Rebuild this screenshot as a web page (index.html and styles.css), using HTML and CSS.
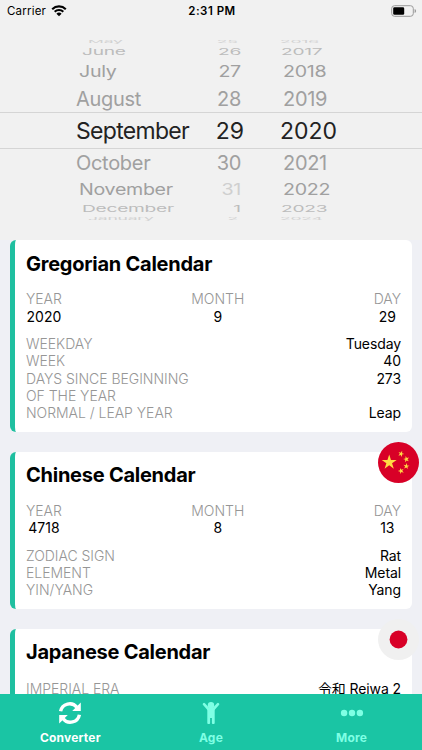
FILE: index.html
```html
<!DOCTYPE html>
<html lang="en">

<head>
  <meta charset="utf-8" />
  <title>Calendar Converter</title>
  <link rel="stylesheet" href="styles.css">
</head>

<body>
  <header class="status">
    <div class="carrier">Carrier
      <svg width="16" height="12" viewBox="0 0 16 12">
        <path d="M1.2 4.2a9.7 9.7 0 0 1 13.6 0M3.7 6.8a6.1 6.1 0 0 1 8.6 0" fill="none" stroke="#000" stroke-width="2.1" />
        <path d="M8 11.3 5.4 8.7a3.7 3.7 0 0 1 5.2 0z" />
      </svg>
    </div>
    <div class="time">2:31 PM</div>
    <svg class="battery" width="26" height="12" viewBox="0 0 26 12">
      <rect x=".7" y=".7" width="21.6" height="10.6" rx="2.8" fill="none" stroke="#999" />
      <rect x="2.2" y="2.2" width="11" height="7.6" rx="1.3" />
      <path d="M23.6 4v4q1.5-.5 1.5-2t-1.5-2z" fill="#999" />
    </svg>
  </header>

  <section class="picker">
    <div class="row edge"><span class="month">May</span><span class="day">25</span><span class="year">2016</span></div>
    <div class="row thin"><span class="month">June</span><span class="day">26</span><span class="year">2017</span></div>
    <div class="row far"><span class="month">July</span><span class="day">27</span><span class="year">2018</span></div>
    <div class="row near"><span class="month">August</span><span class="day">28</span><span class="year">2019</span></div>
    <div class="row selected"><span class="month">September</span><span class="day">29</span><span class="year">2020</span></div>
    <div class="row near"><span class="month">October</span><span class="day">30</span><span class="year">2021</span></div>
    <div class="row far"><span class="month">November</span><span class="day off">31</span><span class="year">2022</span></div>
    <div class="row thin"><span class="month">December</span><span class="day">1</span><span class="year">2023</span></div>
    <div class="row edge"><span class="month">January</span><span class="day">2</span><span class="year">2024</span></div>
  </section>

  <main class="cards">
    <article class="card gregorian">
      <h2>Gregorian Calendar</h2>
      <div class="date">
        <div><label>YEAR</label><b>2020</b></div>
        <div><label>MONTH</label><b>9</b></div>
        <div><label>DAY</label><b>29</b></div>
      </div>
      <dl>
        <dt>WEEKDAY</dt><dd>Tuesday</dd>
        <dt>WEEK</dt><dd>40</dd>
        <dt>DAYS SINCE BEGINNING<br />OF THE YEAR</dt><dd>273</dd>
        <dt>NORMAL / LEAP YEAR</dt><dd>Leap</dd>
      </dl>
    </article>

    <article class="card chinese">
      <svg class="flag" viewBox="0 0 512 512">
        <defs>
          <path id="star" d="M0-10 2.25-3.09 9.51-3.09 3.63 1.18 5.88 8.09 0 3.82-5.88 8.09-3.63 1.18-9.51-3.09-2.25-3.09z" />
        </defs>
        <circle cx="256" cy="256" r="256" fill="#d80027" />
        <g fill="#ffda44">
          <use href="#star" transform="translate(140 254) scale(9.8)" />
          <use href="#star" transform="translate(288 148) rotate(20) scale(4)" />
          <use href="#star" transform="translate(354 215) rotate(-12) scale(4)" />
          <use href="#star" transform="translate(354 303) rotate(8) scale(4)" />
          <use href="#star" transform="translate(288 361) rotate(-20) scale(4)" />
        </g>
      </svg>
      <h2>Chinese Calendar</h2>
      <div class="date">
        <div><label>YEAR</label><b>4718</b></div>
        <div><label>MONTH</label><b>8</b></div>
        <div><label>DAY</label><b>13</b></div>
      </div>
      <dl>
        <dt>ZODIAC SIGN</dt><dd>Rat</dd>
        <dt>ELEMENT</dt><dd>Metal</dd>
        <dt>YIN/YANG</dt><dd>Yang</dd>
      </dl>
    </article>

    <article class="card japanese">
      <svg class="flag" viewBox="0 0 512 512">
        <circle cx="256" cy="256" r="256" fill="#f0f0f0" />
        <circle cx="256" cy="256" r="111" fill="#d80027" />
      </svg>
      <h2>Japanese Calendar</h2>
      <dl>
        <dt>IMPERIAL ERA</dt><dd>令和 Reiwa 2</dd>
      </dl>
    </article>
  </main>

  <nav class="tabs">
    <div class="tab active">
      <svg width="24" height="24" viewBox="0 0 24 24">
        <path d="M2.6 10.3a9.2 9.2 0 0 1 16.3-4M21.4 13.7a9.2 9.2 0 0 1-16.3 4" fill="none" stroke="currentColor" stroke-width="3.4" />
        <path d="M22.8 1.5v8.6h-8.6zM1.2 22.5v-8.6h8.6z" fill="currentColor" />
      </svg>
      <span>Converter</span>
    </div>
    <div class="tab">
      <svg width="24" height="24" viewBox="0 0 24 24">
        <circle cx="12" cy="4.3" r="3.2" fill="currentColor" />
        <path d="M5 3.2 9.4 8h5.2L19 3.2" fill="none" stroke="currentColor" stroke-width="2.6" stroke-linecap="round" stroke-linejoin="round" />
        <path d="M8.3 7.5h7.4v14.6q0 .9-.9.9h-1q-.9 0-.9-.9V17h-1.8v5.1q0 .9-.9.9h-1q-.9 0-.9-.9z" fill="currentColor" />
      </svg>
      <span>Age</span>
    </div>
    <div class="tab">
      <svg width="24" height="24" viewBox="0 0 24 24" fill="currentColor">
        <circle cx="4.1" cy="12" r="3.2" />
        <circle cx="12" cy="12" r="3.2" />
        <circle cx="19.9" cy="12" r="3.2" />
      </svg>
      <span>More</span>
    </div>
  </nav>
</body>

</html>
```
FILE: styles.css
```css
* {
  box-sizing: border-box;
}

body {
  display: flex;
  flex-direction: column;
  height: 750px;
  margin: 0;
  overflow: hidden;
  background: #eff0f5;
  color: #000;
  font-family: Inter, "Noto Sans CJK JP", sans-serif;
}

.status {
  display: grid;
  grid-template-columns: 1fr 1fr 1fr;
  flex: none;
  align-items: center;
  height: 22px;
  padding: 0 5px 0 7px;
  background: #f1f1f1;
  font-size: 11.5px;
}

.carrier {
  display: flex;
  gap: 5px;
  align-items: center;
  letter-spacing: .2px;
}

.time {
  font-weight: 600;
  letter-spacing: .5px;
  text-align: center;
}

.battery {
  justify-self: end;
}

/* date wheel */

.picker {
  flex: none;
  height: 218px;
  padding-top: 16px;
  background: #f1f1f1;
}

.row {
  display: grid;
  grid-template-columns: 76px 113px 55px 37px 1fr;
  height: 27px;
  color: #a0a0a0;
  font-size: 20px;
  letter-spacing: -.3px;
  line-height: 27px;
  white-space: nowrap;
}

.month {
  grid-column: 2;
  justify-self: start;
  transform-origin: left;
}

.day {
  grid-column: 3;
  justify-self: end;
  margin-right: 3px;
  transform-origin: right;
}

.year {
  grid-column: 5;
  justify-self: start;
  margin-left: 2px;
  transform-origin: left;
}

.near {
  line-height: 29px;
}

.selected {
  height: 37px;
  border: 1px solid #d5d5d5;
  border-width: 1px 0;
  color: #222;
  font-size: 23px;
  letter-spacing: -.7px;
  line-height: 37px;
}

.selected .day {
  letter-spacing: 0;
  margin-right: 0;
}

.selected .year {
  margin-left: -1px;
  letter-spacing: 0;
}

.far .month,
.far .day,
.far .year {
  transform: scale(.98, .77);
}

.far .month {
  margin-left: 3px;
}

.thin {
  height: 12px;
  color: #bcbcbc;
  line-height: 12px;
}

.thin .month,
.thin .day,
.thin .year {
  transform: scale(.96, .46);
}

.thin .month {
  margin-left: 6px;
}

.thin .year {
  margin-left: 0;
}

.edge {
  height: 8px;
  color: #d2d2d2;
  line-height: 8px;
}

.edge .month,
.edge .day,
.edge .year {
  transform: scale(.88, .2);
}

.edge .month {
  margin-left: 12px;
}

.edge .day {
  margin-right: 6px;
}

.edge .year {
  margin-left: -1px;
}

.row .off {
  color: #cfcfcf;
}

/* calendars */

.cards {
  flex: 1;
  min-height: 0;
  padding: 0 10.5px 0 10px;
  overflow: hidden;
}

.card {
  position: relative;
  margin-bottom: 20px;
  padding: 13px 10.5px 0 11px;
  border-left: 5px solid #1fbfa0;
  border-radius: 6px;
  background: #fff;
  font-size: 14px;
  line-height: 17.3px;
}

.gregorian {
  height: 192px;
  padding-top: 14px;
}

.chinese {
  height: 157px;
}

.japanese {
  height: 100px;
}

h2 {
  margin: 0 0 16px;
  font-size: 20px;
  font-weight: 700;
  letter-spacing: -.25px;
  line-height: 21px;
}

.gregorian h2 {
  margin-bottom: 15.4px;
}

.japanese h2 {
  margin-bottom: 17px;
}

.date {
  display: flex;
  justify-content: space-between;
  margin-bottom: 10px;
}

.date label,
.date b {
  display: block;
  font-weight: 400;
  text-align: center;
}

.date label,
dt {
  color: #969696;
  font-weight: 350;
  letter-spacing: -.03px;
}

dl {
  display: grid;
  grid-template-columns: auto 1fr;
  margin: 0;
}

dd {
  margin: 0;
  letter-spacing: -.1px;
  text-align: right;
}

.flag {
  position: absolute;
  top: -10px;
  right: -7px;
  width: 41px;
  height: 41px;
}

/* tab bar */

.tabs {
  display: grid;
  grid-template-columns: 1fr 1fr 1fr;
  flex: none;
  height: 56px;
  padding-top: 7px;
  background: #1ac5a4;
}

.tab {
  display: flex;
  flex-direction: column;
  align-items: center;
  color: #7fffe4;
  font-size: 12px;
  font-weight: 700;
  letter-spacing: .2px;
  line-height: 16px;
}

.tab span {
  margin-top: 5px;
}

.active {
  color: #fff;
}
```
